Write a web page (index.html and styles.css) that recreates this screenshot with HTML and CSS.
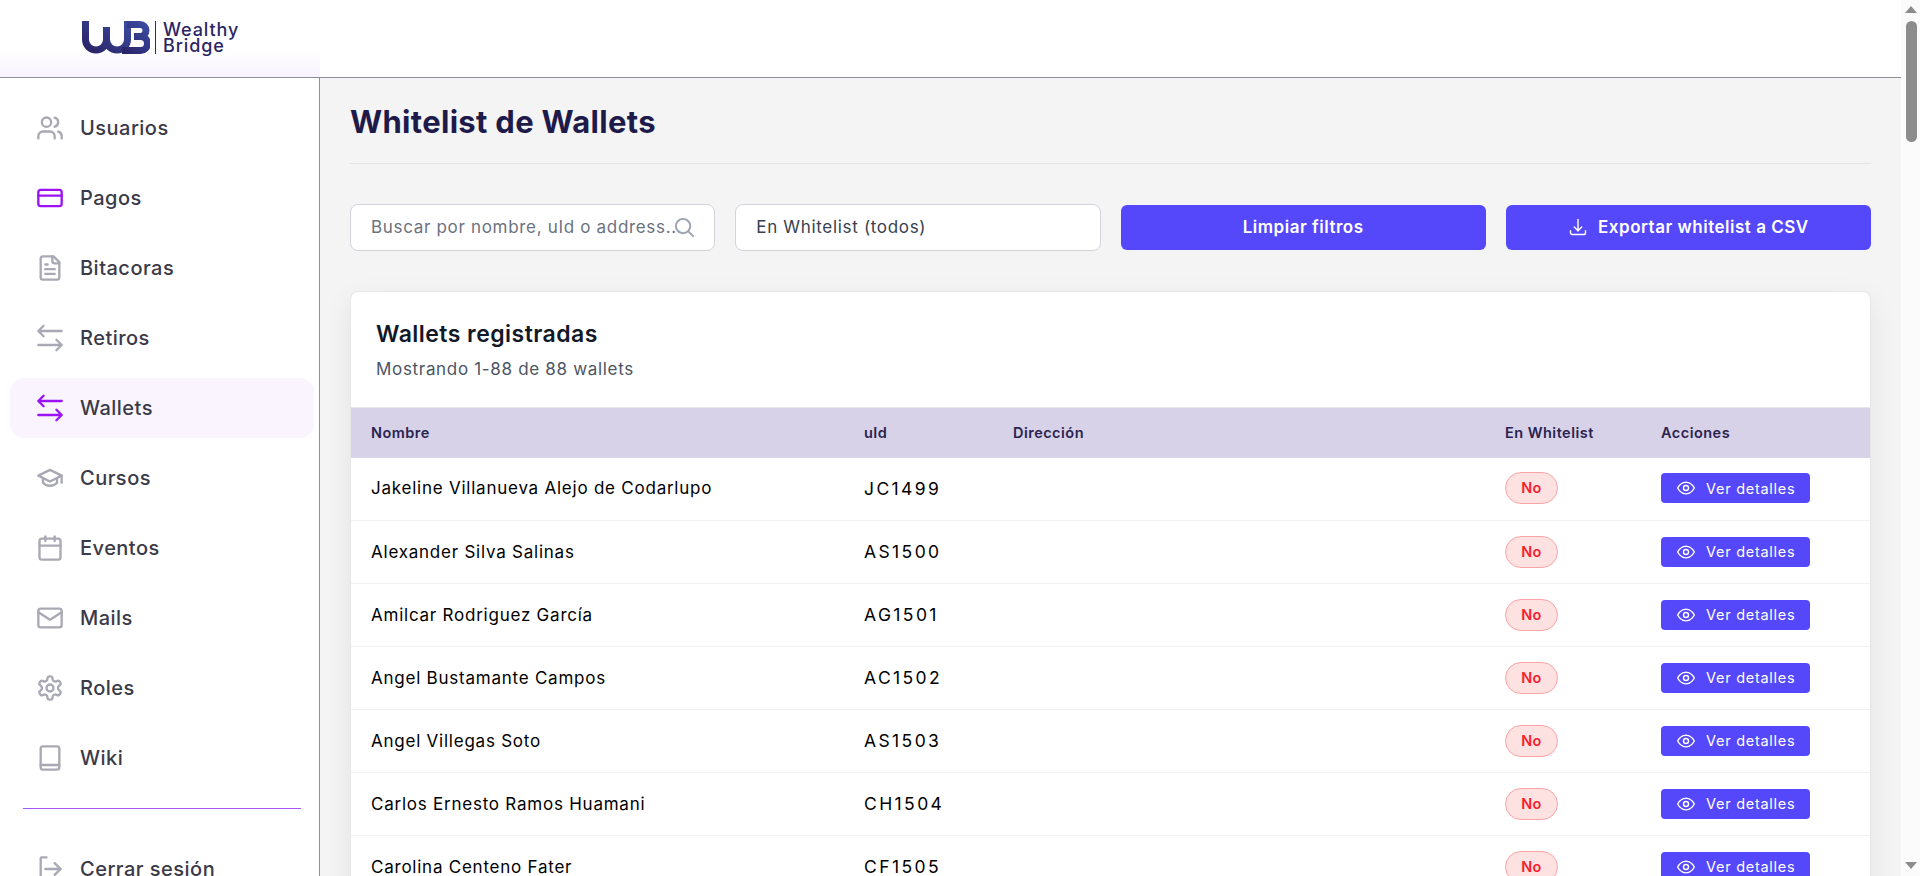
FILE: index.html

```html
<!DOCTYPE html>
<html lang="es">
<head>
    <meta charset="UTF-8">
    <meta name="viewport" content="width=device-width, initial-scale=1.0">
    <title>Whitelist de Wallets - Wealthy Bridge</title>
    <link rel="stylesheet" href="styles.css">
</head>
<body>
    <div class="page">
        <div class="app">
            <header class="topbar">
                <div class="brand">
                    <svg class="brand-mark" width="68" height="33" viewBox="0 0 68 33" fill="none">
                        <defs>
                            <linearGradient id="wb" x1="0" y1="1" x2="1" y2="0">
                                <stop offset="0" stop-color="#2a2365"/>
                                <stop offset="1" stop-color="#3b4ca3"/>
                            </linearGradient>
                        </defs>
                        <path d="M3.5 0V18.5a10.5 10.5 0 0 0 21 0V6M24.5 18.5a10.5 10.5 0 0 0 21 0V0" stroke="url(#wb)" stroke-width="7"/>
                        <path d="M45 3.5H58a6 6 0 0 1 0 12H52M52 15.5H58.5a7 7 0 0 1 0 14H40" stroke="url(#wb)" stroke-width="7"/>
                    </svg>
                    <span class="brand-sep"></span>
                    <span class="brand-name">Wealthy<br>Bridge</span>
                </div>
            </header>
            <div class="layout">
                <nav class="sidebar">
                    <a class="nav-item">
                        <svg class="nav-icon" viewBox="0 0 24 24"><path d="M16 21v-2a4 4 0 0 0-4-4H6a4 4 0 0 0-4 4v2"/><circle cx="9" cy="7" r="4"/><path d="M22 21v-2a4 4 0 0 0-3-3.87"/><path d="M16 3.13a4 4 0 0 1 0 7.75"/></svg>
                        Usuarios
                    </a>
                    <a class="nav-item nav-accent">
                        <svg class="nav-icon" viewBox="0 0 24 24"><rect x="2" y="5" width="20" height="14" rx="2"/><path d="M2 10h20"/></svg>
                        Pagos
                    </a>
                    <a class="nav-item">
                        <svg class="nav-icon" viewBox="0 0 24 24"><path d="M15 2H6a2 2 0 0 0-2 2v16a2 2 0 0 0 2 2h12a2 2 0 0 0 2-2V7z"/><path d="M14 2v4a2 2 0 0 0 2 2h4"/><path d="M10 9H8"/><path d="M16 13H8"/><path d="M16 17H8"/></svg>
                        Bitacoras
                    </a>
                    <a class="nav-item">
                        <svg class="nav-icon" viewBox="0 0 24 24"><path d="M2 6h20M2 6l4.500-4.500M2 6l4.500 4.500"/><path d="M22 18H2M22 18l-4.500-4.500M22 18l-4.500 4.500"/></svg>
                        Retiros
                    </a>
                    <a class="nav-item nav-accent nav-active">
                        <svg class="nav-icon" viewBox="0 0 24 24"><path d="M2 6h20M2 6l4.500-4.500M2 6l4.500 4.500"/><path d="M22 18H2M22 18l-4.500-4.500M22 18l-4.500 4.500"/></svg>
                        Wallets
                    </a>
                    <a class="nav-item">
                        <svg class="nav-icon" viewBox="0 0 24 24"><path d="M22 10 12 5 2 10l10 5 10-5z"/><path d="M6 12.5V16c3 3.500 9 3.500 12 0v-3.500"/><path d="M22 10v6"/></svg>
                        Cursos
                    </a>
                    <a class="nav-item">
                        <svg class="nav-icon" viewBox="0 0 24 24"><rect x="3" y="4" width="18" height="18" rx="2"/><path d="M16 2v4"/><path d="M8 2v4"/><path d="M3 10h18"/></svg>
                        Eventos
                    </a>
                    <a class="nav-item">
                        <svg class="nav-icon" viewBox="0 0 24 24"><rect x="2" y="4" width="20" height="16" rx="2"/><path d="m2 7 10 6.500L22 7"/></svg>
                        Mails
                    </a>
                    <a class="nav-item">
                        <svg class="nav-icon" viewBox="0 0 24 24"><path d="M12.22 2h-.44a2 2 0 0 0-2 2v.18a2 2 0 0 1-1 1.73l-.43.25a2 2 0 0 1-2 0l-.15-.08a2 2 0 0 0-2.73.73l-.22.38a2 2 0 0 0 .73 2.73l.15.1a2 2 0 0 1 1 1.72v.51a2 2 0 0 1-1 1.74l-.15.09a2 2 0 0 0-.73 2.73l.22.38a2 2 0 0 0 2.73.73l.15-.08a2 2 0 0 1 2 0l.43.25a2 2 0 0 1 1 1.73V20a2 2 0 0 0 2 2h.44a2 2 0 0 0 2-2v-.18a2 2 0 0 1 1-1.73l.43-.25a2 2 0 0 1 2 0l.15.08a2 2 0 0 0 2.73-.73l.22-.39a2 2 0 0 0-.73-2.73l-.15-.08a2 2 0 0 1-1-1.74v-.5a2 2 0 0 1 1-1.74l.15-.09a2 2 0 0 0 .73-2.73l-.22-.38a2 2 0 0 0-2.73-.73l-.15.08a2 2 0 0 1-2 0l-.43-.25a2 2 0 0 1-1-1.73V4a2 2 0 0 0-2-2z"/><circle cx="12" cy="12" r="3"/></svg>
                        Roles
                    </a>
                    <a class="nav-item">
                        <svg class="nav-icon" viewBox="0 0 24 24"><path d="M4 4a2 2 0 0 1 2-2h12a2 2 0 0 1 2 2v16a2 2 0 0 1-2 2H6a2 2 0 0 1-2-2z"/><path d="M4 18h16"/></svg>
                        Wiki
                    </a>
                    <hr class="nav-sep">
                    <a class="nav-item">
                        <svg class="nav-icon" viewBox="0 0 24 24"><path d="M9 2H5a1 1 0 0 0-1 1v18"/><path d="M8 12h13"/><path d="m16 7 5 5-5 5"/></svg>
                        Cerrar sesión
                    </a>
                </nav>
                <main class="content">
                    <h1 class="page-title">Whitelist de Wallets</h1>
                    <div class="filters">
                        <div class="search">
                            <input class="field" type="text" placeholder="Buscar por nombre, uId o address...">
                            <svg class="search-icon" viewBox="0 0 24 24"><circle cx="10.500" cy="10.500" r="7.500"/><path d="m21 21-5.200-5.200"/></svg>
                        </div>
                        <select class="field">
                            <option>En Whitelist (todos)</option>
                        </select>
                        <button class="btn">Limpiar filtros</button>
                        <button class="btn">
                            <svg class="btn-icon" viewBox="0 0 24 24"><path d="M3 16.500v2.250A2.250 2.250 0 0 0 5.250 21h13.500A2.250 2.250 0 0 0 21 18.750V16.500"/><path d="m7.500 12 4.500 4.500 4.500-4.500"/><path d="M12 16.500V3"/></svg>
                            Exportar whitelist a CSV
                        </button>
                    </div>
                    <section class="card">
                        <div class="card-head">
                            <h2>Wallets registradas</h2>
                            <p>Mostrando 1-88 de 88 wallets</p>
                        </div>
                        <table class="wallets">
                            <colgroup>
                                <col class="col-name"><col class="col-uid"><col class="col-addr"><col class="col-flag"><col>
                            </colgroup>
                            <thead>
                                <tr><th>Nombre</th><th>uId</th><th>Dirección</th><th>En Whitelist</th><th>Acciones</th></tr>
                            </thead>
                            <tbody>
                                <tr><td>Jakeline Villanueva Alejo de Codarlupo</td><td class="uid">JC1499</td><td></td><td><span class="badge">No</span></td><td><button class="btn-small"><svg class="eye" viewBox="0 0 24 24"><path d="M2 12s3.600-7 10-7 10 7 10 7-3.600 7-10 7-10-7-10-7z"/><circle cx="12" cy="12" r="3"/></svg>Ver detalles</button></td></tr>
                                <tr><td>Alexander Silva Salinas</td><td class="uid">AS1500</td><td></td><td><span class="badge">No</span></td><td><button class="btn-small"><svg class="eye" viewBox="0 0 24 24"><path d="M2 12s3.600-7 10-7 10 7 10 7-3.600 7-10 7-10-7-10-7z"/><circle cx="12" cy="12" r="3"/></svg>Ver detalles</button></td></tr>
                                <tr><td>Amilcar Rodriguez García</td><td class="uid">AG1501</td><td></td><td><span class="badge">No</span></td><td><button class="btn-small"><svg class="eye" viewBox="0 0 24 24"><path d="M2 12s3.600-7 10-7 10 7 10 7-3.600 7-10 7-10-7-10-7z"/><circle cx="12" cy="12" r="3"/></svg>Ver detalles</button></td></tr>
                                <tr><td>Angel Bustamante Campos</td><td class="uid">AC1502</td><td></td><td><span class="badge">No</span></td><td><button class="btn-small"><svg class="eye" viewBox="0 0 24 24"><path d="M2 12s3.600-7 10-7 10 7 10 7-3.600 7-10 7-10-7-10-7z"/><circle cx="12" cy="12" r="3"/></svg>Ver detalles</button></td></tr>
                                <tr><td>Angel Villegas Soto</td><td class="uid">AS1503</td><td></td><td><span class="badge">No</span></td><td><button class="btn-small"><svg class="eye" viewBox="0 0 24 24"><path d="M2 12s3.600-7 10-7 10 7 10 7-3.600 7-10 7-10-7-10-7z"/><circle cx="12" cy="12" r="3"/></svg>Ver detalles</button></td></tr>
                                <tr><td>Carlos Ernesto Ramos Huamani</td><td class="uid">CH1504</td><td></td><td><span class="badge">No</span></td><td><button class="btn-small"><svg class="eye" viewBox="0 0 24 24"><path d="M2 12s3.600-7 10-7 10 7 10 7-3.600 7-10 7-10-7-10-7z"/><circle cx="12" cy="12" r="3"/></svg>Ver detalles</button></td></tr>
                                <tr><td>Carolina Centeno Fater</td><td class="uid">CF1505</td><td></td><td><span class="badge">No</span></td><td><button class="btn-small"><svg class="eye" viewBox="0 0 24 24"><path d="M2 12s3.600-7 10-7 10 7 10 7-3.600 7-10 7-10-7-10-7z"/><circle cx="12" cy="12" r="3"/></svg>Ver detalles</button></td></tr>
                            </tbody>
                        </table>
                    </section>
                </main>
            </div>
        </div>
        <div class="scrollbar">
            <span class="arrow-up"></span>
            <span class="thumb"></span>
            <span class="arrow-down"></span>
        </div>
    </div>
</body>
</html>
```

FILE: styles.css

```css
* { box-sizing: border-box; }
html, body { margin: 0; height: 100%; overflow: hidden; }
body { font-family: Inter, "Noto Sans", sans-serif; background: #fff; color: #000; letter-spacing: 0.03em; }

.page { display: flex; height: 876px; overflow: hidden; }
.app { flex: 1; min-width: 0; display: flex; flex-direction: column; }

/* fake browser scrollbar, page is clipped to the window */
.scrollbar { width: 19px; flex: none; background: #fbfbfb; display: flex; flex-direction: column; align-items: center; padding: 6px 0 7px 1px; }
.thumb { width: 11px; height: 121px; margin-top: 8px; border-radius: 6px; background: #8c8c8c; }
.arrow-up { border: 6.5px solid transparent; border-top: 0; border-bottom: 7px solid #8c8c8c; }
.arrow-down { border: 6.5px solid transparent; border-bottom: 0; border-top: 7px solid #8c8c8c; margin-top: auto; }

.topbar { height: 78px; flex: none; background: #fff; border-bottom: 1px solid #8f8c96; }
.brand { width: 320px; height: 77px; display: flex; align-items: flex-start; padding: 21px 0 0 82px; background: linear-gradient(#fff 62%, #f8f3fd); }
.brand-sep { width: 1px; height: 33px; margin: 0 7px 0 5px; background: #2f2a6b; }
.brand-name { font-size: 18px; line-height: 16px; font-weight: 500; color: #2b2566; letter-spacing: 0.05em; padding-top: 1px; }

.layout { flex: 1; min-height: 0; display: flex; }
.sidebar { width: 320px; flex: none; background: #fff; border-right: 1px solid #92909a; padding: 20px 5px 0 10px; display: flex; flex-direction: column; gap: 10px; }
.nav-item { height: 60px; flex: none; display: flex; align-items: center; gap: 16px; padding-left: 26px; border-radius: 14px; font-size: 20px; font-weight: 500; color: #3a3a48; }
.nav-icon { width: 28px; height: 28px; flex: none; fill: none; stroke: #a9a9b5; stroke-width: 2; stroke-linecap: round; stroke-linejoin: round; }
.nav-accent .nav-icon { stroke: #9c12f5; }
.nav-active { background: #f9f4fe; }
.nav-sep { width: 278px; flex: none; margin: 10px 0 20px 13px; border: 0; border-top: 1px solid #a855f7; }

.content { flex: 1; min-width: 0; background: #f4f4f5; padding: 0 30px 0 30px; }
.page-title { margin: 0; height: 86px; padding-top: 25px; border-bottom: 1px solid #e3e4e8; font-size: 31px; line-height: 38px; font-weight: 700; color: #1e1b4b; letter-spacing: 0.01em; }

.filters { display: grid; grid-template-columns: repeat(4, 1fr); gap: 20px; margin-top: 40px; height: 47px; }
.search { position: relative; }
.search-icon { position: absolute; right: 19px; top: 12px; width: 23px; height: 23px; fill: none; stroke: #9ca3af; stroke-width: 2; stroke-linecap: round; }
.field { width: 100%; height: 47px; padding: 0 32px 2px 20px; border: 1px solid #d1d5db; border-radius: 8px; background: #fff; font-family: inherit; font-size: 17px; letter-spacing: 0.04em; color: #374151; outline: none; appearance: none; }
.field::placeholder { color: #6b7280; opacity: 1; }
.btn { height: 45px; margin-top: 1px; padding-bottom: 2px; display: flex; align-items: center; justify-content: center; gap: 10px; border: 0; border-radius: 6px; background: #5548fa; color: #fff; font-family: inherit; font-size: 17px; font-weight: 600; letter-spacing: 0.03em; }
.btn-icon { width: 20px; height: 20px; fill: none; stroke: #fff; stroke-width: 1.7; stroke-linecap: round; stroke-linejoin: round; }

.card { margin-top: 40px; background: #fff; border: 1px solid #e5e7eb; border-bottom: 0; border-radius: 8px 8px 0 0; box-shadow: 0 10px 30px rgba(0, 0, 0, 0.07); }
.card-head { height: 115px; padding: 27px 0 0 25px; }
.card-head h2 { margin: 0; font-size: 23px; line-height: 30px; font-weight: 600; color: #111827; letter-spacing: 0.02em; }
.card-head p { margin: 8px 0 0; font-size: 17px; line-height: 24px; color: #4b5563; letter-spacing: 0.04em; }

.wallets { width: 100%; border-collapse: collapse; table-layout: fixed; }
.col-name { width: 493px; }
.col-uid { width: 149px; }
.col-addr { width: 492px; }
.col-flag { width: 156px; }
.wallets th { height: 50px; padding: 0 20px; background: #d7d2e7; border-top: 1px solid #e5e7eb; text-align: left; font-size: 14.5px; font-weight: 600; color: #2a2350; }
.wallets td { height: 63px; padding: 0 20px 1px; border-bottom: 1px solid #f1f1f3; font-size: 17px; letter-spacing: 0.045em; color: #000; }
.wallets td.uid { font-size: 17.5px; letter-spacing: 2.4px; }
.badge { display: inline-block; width: 53px; height: 32px; border: 1px solid #fca5a5; border-radius: 16px; background: #fee2e2; text-align: center; line-height: 30px; font-size: 14.5px; font-weight: 600; letter-spacing: 0.03em; color: #f5222d; }
.btn-small { width: 149px; height: 30px; display: flex; align-items: center; gap: 10px; padding: 0 0 0 15px; border: 0; border-radius: 4px; background: #5548fa; color: #fff; font-family: inherit; font-size: 14.5px; letter-spacing: 0.05em; vertical-align: middle; }
.eye { width: 20px; height: 20px; flex: none; fill: none; stroke: #fff; stroke-width: 1.7; }
```
